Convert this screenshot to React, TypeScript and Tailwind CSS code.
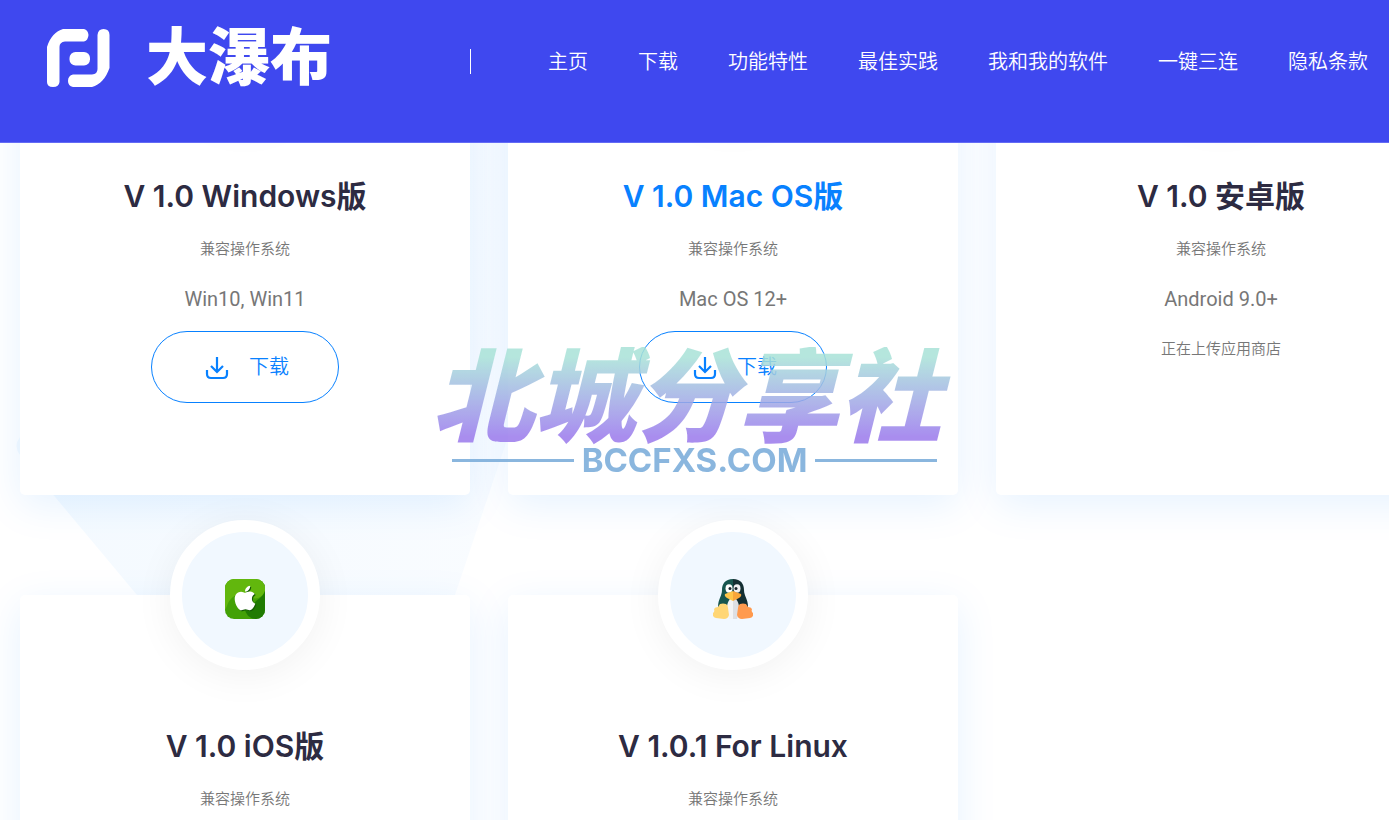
import React from "react";
import { FaApple } from "react-icons/fa";
import clsx from "clsx";

const navItems = ["主页", "下载", "功能特性", "最佳实践", "我和我的软件", "一键三连", "隐私条款"];

type Release = {
  title: string;
  system?: string;
  note?: string;
  active?: boolean;
  download?: boolean;
  icon?: React.ReactNode;
};

function LogoMark() {
  return (
    <svg width="64" height="60" viewBox="0 0 64 60" fill="#fff" aria-hidden="true">
      <path d="M1 19 C4 9 10 3 17 1 H38 Q42 2 42.500 7 Q42 12.500 38 13.500 H19 Q13.500 14 13.500 19 V54 Q13 59 7 59 Q1 59 1 54Z" />
      <path d="M63.500 40 C60 50 54 57 46 59 H27 Q22 58 22 53 Q22 47.500 27 46.500 H46 Q51.500 46 51.500 41 V7 Q52 1 57.500 1 Q63.500 1 63.500 7Z" />
      <rect x="23.500" y="24" width="20.500" height="13.500" rx="6" />
    </svg>
  );
}

function AppleIcon() {
  return (
    <div className="relative flex h-10 w-10 items-center justify-center">
      <svg className="absolute inset-0" width="40" height="40" viewBox="0 0 40 40" aria-hidden="true">
        <defs>
          <clipPath id="tile">
            <rect width="40" height="40" rx="9" />
          </clipPath>
        </defs>
        <g clipPath="url(#tile)">
          <rect width="40" height="40" fill="#43a106" />
          <path d="M0 0H40V12C37 19 30 22 24 17C15 12 5 17 2 27L0 31Z" fill="#62b70d" />
          <path d="M40 12C37 20 31 20 29 25C28 31 25 32 20 31C22 38 27 40 32 40H40Z" fill="#207b02" />
          <path d="M34 0H40V7C39 4 37 1 34 0ZM0 33C1 37 3 39 7 40H0ZM40 33C39 37 37 39 33 40H40Z" fill="#123f06" />
        </g>
      </svg>
      <FaApple className="absolute top-[6px] left-[7px] text-[#145c04]" size={28} />
      <FaApple className="absolute top-[5px] left-[6px] text-white" size={28} />
    </div>
  );
}

function LinuxIcon() {
  return (
    <svg width="40" height="40" viewBox="0 0 40 40" aria-hidden="true">
      <path d="M20 0C12 0 9 5 9 11C9 17 5 20 5 28L9 32H20Z" fill="#17564f" />
      <path d="M20 0C28 0 31 5 31 11C31 17 35 20 35 28L31 32H20Z" fill="#142f33" />
      <path d="M20 18C15 20 13 27 14 33L16 40H20Z" fill="#f4f4f5" />
      <path d="M20 18C25 20 27 27 26 33L24 40H20Z" fill="#dedfe3" />
      <ellipse cx="16" cy="9.500" rx="3.500" ry="4.200" fill="#fff" />
      <ellipse cx="24" cy="9.500" rx="3.500" ry="4.200" fill="#f0f1f3" />
      <circle cx="17" cy="9.500" r="1.500" fill="#17252b" />
      <circle cx="23" cy="9.500" r="1.500" fill="#17252b" />
      <path d="M20 12L12 15Q11 17 14 19L20 22Z" fill="#ffc64a" />
      <path d="M20 12L28 15Q29 17 26 19L20 22Z" fill="#f9a63a" />
      <path d="M7 25Q10 24 13 25Q15 26 15 29L16 36Q15 40 11 40L3 39Q-1 38 0 34Q2 33 1 30Q2 28 5 28Z" fill="#ffd675" />
      <path d="M33 25Q30 24 27 25Q25 26 25 29L24 36Q25 40 29 40L37 39Q41 38 40 34Q38 33 39 30Q38 28 35 28Z" fill="#ff9a4e" />
    </svg>
  );
}

function DownloadIcon() {
  return (
    <svg className="mt-[2px]" width="24" height="24" viewBox="0 0 24 24" fill="none" stroke="currentColor" strokeWidth="2.200" aria-hidden="true">
      <path d="M12 1V16M6 10L12 16L18 10" />
      <path d="M2 14V18Q2 22 6 22H18Q22 22 22 18V14" />
    </svg>
  );
}

const releases: Release[] = [
  { title: "V 1.0 Windows版", system: "Win10, Win11", download: true },
  { title: "V 1.0 Mac OS版", system: "Mac OS 12+", download: true, active: true },
  { title: "V 1.0 安卓版", system: "Android 9.0+", note: "正在上传应用商店" },
  { title: "V 1.0 iOS版", icon: <AppleIcon /> },
  { title: "V 1.0.1 For Linux", icon: <LinuxIcon /> },
];

function ReleaseCard({ release }: { release: Release }) {
  return (
    <article className="flex h-[450px] flex-col items-center rounded-[5px] bg-white text-center text-[#777] shadow-[0_10px_40px_rgba(0,129,255,0.1)]">
      <div className="-mt-[75px] flex h-[150px] w-[150px] items-center justify-center rounded-full border-[12px] border-white bg-[#f1f8ff] pt-2 shadow-[0_5px_40px_rgba(0,0,0,0.06)]">
        {release.icon}
      </div>
      <h2 className={clsx("mt-14 text-[30px] leading-10 font-semibold", release.active ? "text-[#0881ff]" : "text-[#2d2b42]")}>
        {release.title}
      </h2>
      <p className="mt-[18px] text-[15px] leading-[30px] font-[350]">兼容操作系统</p>
      {release.system && <p className="mt-5 font-['Roboto'] text-xl leading-[30px]">{release.system}</p>}
      {release.download && (
        <button type="button" className="mt-[17px] flex h-[72px] w-[188px] items-center justify-center gap-5 rounded-full border border-[#0881ff] pl-1 text-xl font-[350] text-[#0881ff]">
          <DownloadIcon />
          下载
        </button>
      )}
      {release.note && <p className="mt-5 text-[15px] leading-[30px] font-[350]">{release.note}</p>}
    </article>
  );
}

export default function App() {
  return (
    <div className="relative h-screen overflow-hidden bg-white font-['Inter','Noto_Sans_CJK_SC',sans-serif]">
      <header className="sticky top-0 z-10 flex h-[143px] items-start border-b border-[#636bf5] bg-[#3f48ef] pr-[21px] pl-[46px] text-white">
        <a href="#home" className="flex h-[116px] items-center gap-9 whitespace-nowrap">
          <LogoMark />
          <span className="text-[62px] leading-none font-black">大瀑布</span>
        </a>
        <div className="flex h-[123px] flex-1 items-center justify-between pl-[138px]">
          <span className="h-[25px] w-px bg-white" />
          <nav className="flex gap-[50px] text-xl whitespace-nowrap">
            {navItems.map((item) => (
              <a key={item} href="#top" className="font-[350]">{item}</a>
            ))}
          </nav>
        </div>
      </header>

      {/* faint shape behind the cards */}
      <svg className="absolute top-[143px] left-0" width="560" height="677" viewBox="0 143 560 677" aria-hidden="true">
        <defs>
          <linearGradient id="shape" x1="0" y1="0" x2="1" y2="0">
            <stop offset="0" stopColor="#f4faff" />
            <stop offset="1" stopColor="#f9fcff" />
          </linearGradient>
        </defs>
        <path d="M20 437Q13 446 20 455L137 595L328 820H378L455 595L508 437V143H20Z" fill="url(#shape)" />
      </svg>

      <main className="relative -mt-[98px] -mr-[57px] grid grid-cols-3 gap-x-[38px] gap-y-[100px] pl-5">
        {releases.map((release) => (
          <ReleaseCard key={release.title} release={release} />
        ))}
      </main>

      {/* site watermark */}
      <div className="pointer-events-none absolute inset-x-0 top-[347px] z-20 flex flex-col items-center opacity-85">
        <div className="mr-4 bg-linear-to-b from-[#a8e2d8] from-10% to-[#9a79ec] to-90% bg-clip-text px-4 text-[102px] leading-[100px] font-black whitespace-nowrap text-transparent italic">
          北城分享社
        </div>
        <div className="flex items-center gap-2 text-[33px] leading-[26px] font-bold text-[#76aad9]">
          <span className="h-[3px] w-[122px] bg-[#76aad9]" />
          BCCFXS.COM
          <span className="h-[3px] w-[122px] bg-[#76aad9]" />
        </div>
      </div>
    </div>
  );
}
